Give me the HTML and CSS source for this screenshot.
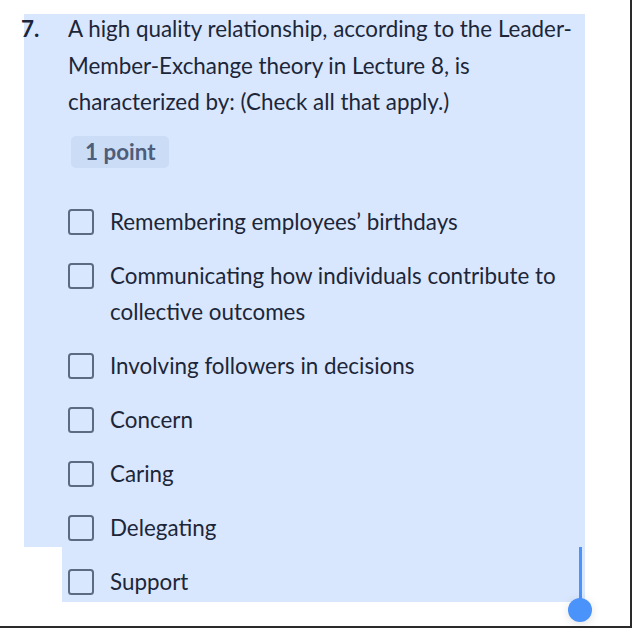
FILE: index.html
```html
<!DOCTYPE html>
<html>
<head>
<meta charset="utf-8">
<link rel="stylesheet" href="styles.css">
</head>
<body>
<div class="frame">
  <div class="sel sel-main">
    <div class="q-head">
      <span class="q-num">7.</span>
      <p class="q-text">A high quality relationship, according to the Leader-Member-Exchange theory in Lecture 8, is characterized by: (Check all that apply.)</p>
    </div>
    <div class="badge-row"><span class="badge">1 point</span></div>
    <ul class="options">
      <li class="option"><span class="box"></span><span class="label">Remembering employees’ birthdays</span></li>
      <li class="option"><span class="box"></span><span class="label">Communicating how individuals contribute to collective outcomes</span></li>
      <li class="option"><span class="box"></span><span class="label">Involving followers in decisions</span></li>
      <li class="option"><span class="box"></span><span class="label">Concern</span></li>
      <li class="option"><span class="box"></span><span class="label">Caring</span></li>
      <li class="option"><span class="box"></span><span class="label">Delegating</span></li>
    </ul>
  </div>
  <div class="sel sel-last">
    <div class="option"><span class="box"></span><span class="label">Support</span></div>
  </div>
  <div class="handle"><span class="handle-line"></span><span class="handle-knob"></span></div>
</div>
</body>
</html>
```
FILE: styles.css
```css
html, body {
  margin: 0;
  padding: 0;
  background: #ffffff;
}
body {
  font-family: Lato, "Liberation Sans", sans-serif;
  color: #1c2638;
}
.frame {
  position: relative;
  box-sizing: border-box;
  width: 632px;
  height: 628px;
  border-right: 2px solid #2a2a2a;
  border-bottom: 2px solid #2a2a2a;
  padding-top: 14px;
  overflow: hidden;
}
.sel {
  background: #d9e7fe;
}
.sel-main {
  display: flow-root;
  margin-left: 24px;
  width: 561px;
  padding-bottom: 1px;
}
.sel-last {
  margin-left: 62px;
  width: 523px;
  padding: 17px 0 2px 6px;
  box-sizing: border-box;
  height: 55px;
}
.q-head {
  display: flex;
  margin-top: -3px;
  font-size: 22.4px;
  line-height: 36.5px;
}
.q-num {
  width: 47px;
  margin-left: -3px;
  flex: none;
  font-weight: 700;
}
.q-text {
  margin: 0;
  padding-right: 4px;
}
.badge-row {
  padding: 15.5px 0 0 47px;
}
.badge {
  display: inline-block;
  background: #cbdcf6;
  color: #4d5d7a;
  font-weight: 700;
  font-size: 22.4px;
  line-height: 32px;
  padding: 0 13px 0 14px;
  border-radius: 5px;
}
.options {
  list-style: none;
  margin: 36px 0 0 0;
  padding: 0 0 0 44px;
  display: flex;
  flex-direction: column;
  gap: 18px;
}
.option {
  display: flex;
  align-items: flex-start;
  font-size: 22.4px;
  line-height: 36px;
}
.box {
  flex: none;
  box-sizing: border-box;
  width: 26px;
  height: 26px;
  margin-top: 5px;
  margin-right: 16px;
  border: 2.5px solid #5d6b82;
  border-radius: 3.5px;
}
.label {
  padding-right: 14px;
}
.handle {
  position: absolute;
  left: 568px;
  top: 547px;
  width: 24px;
  height: 74px;
}
.handle-line {
  position: absolute;
  left: 11px;
  top: 0;
  width: 3px;
  height: 56px;
  background: #4a93fb;
}
.handle-knob {
  position: absolute;
  left: 0;
  top: 51px;
  width: 24px;
  height: 24px;
  border-radius: 50%;
  background: #4a93fb;
  box-shadow: 0 2px 10px rgba(0, 0, 0, 0.12);
}
```
